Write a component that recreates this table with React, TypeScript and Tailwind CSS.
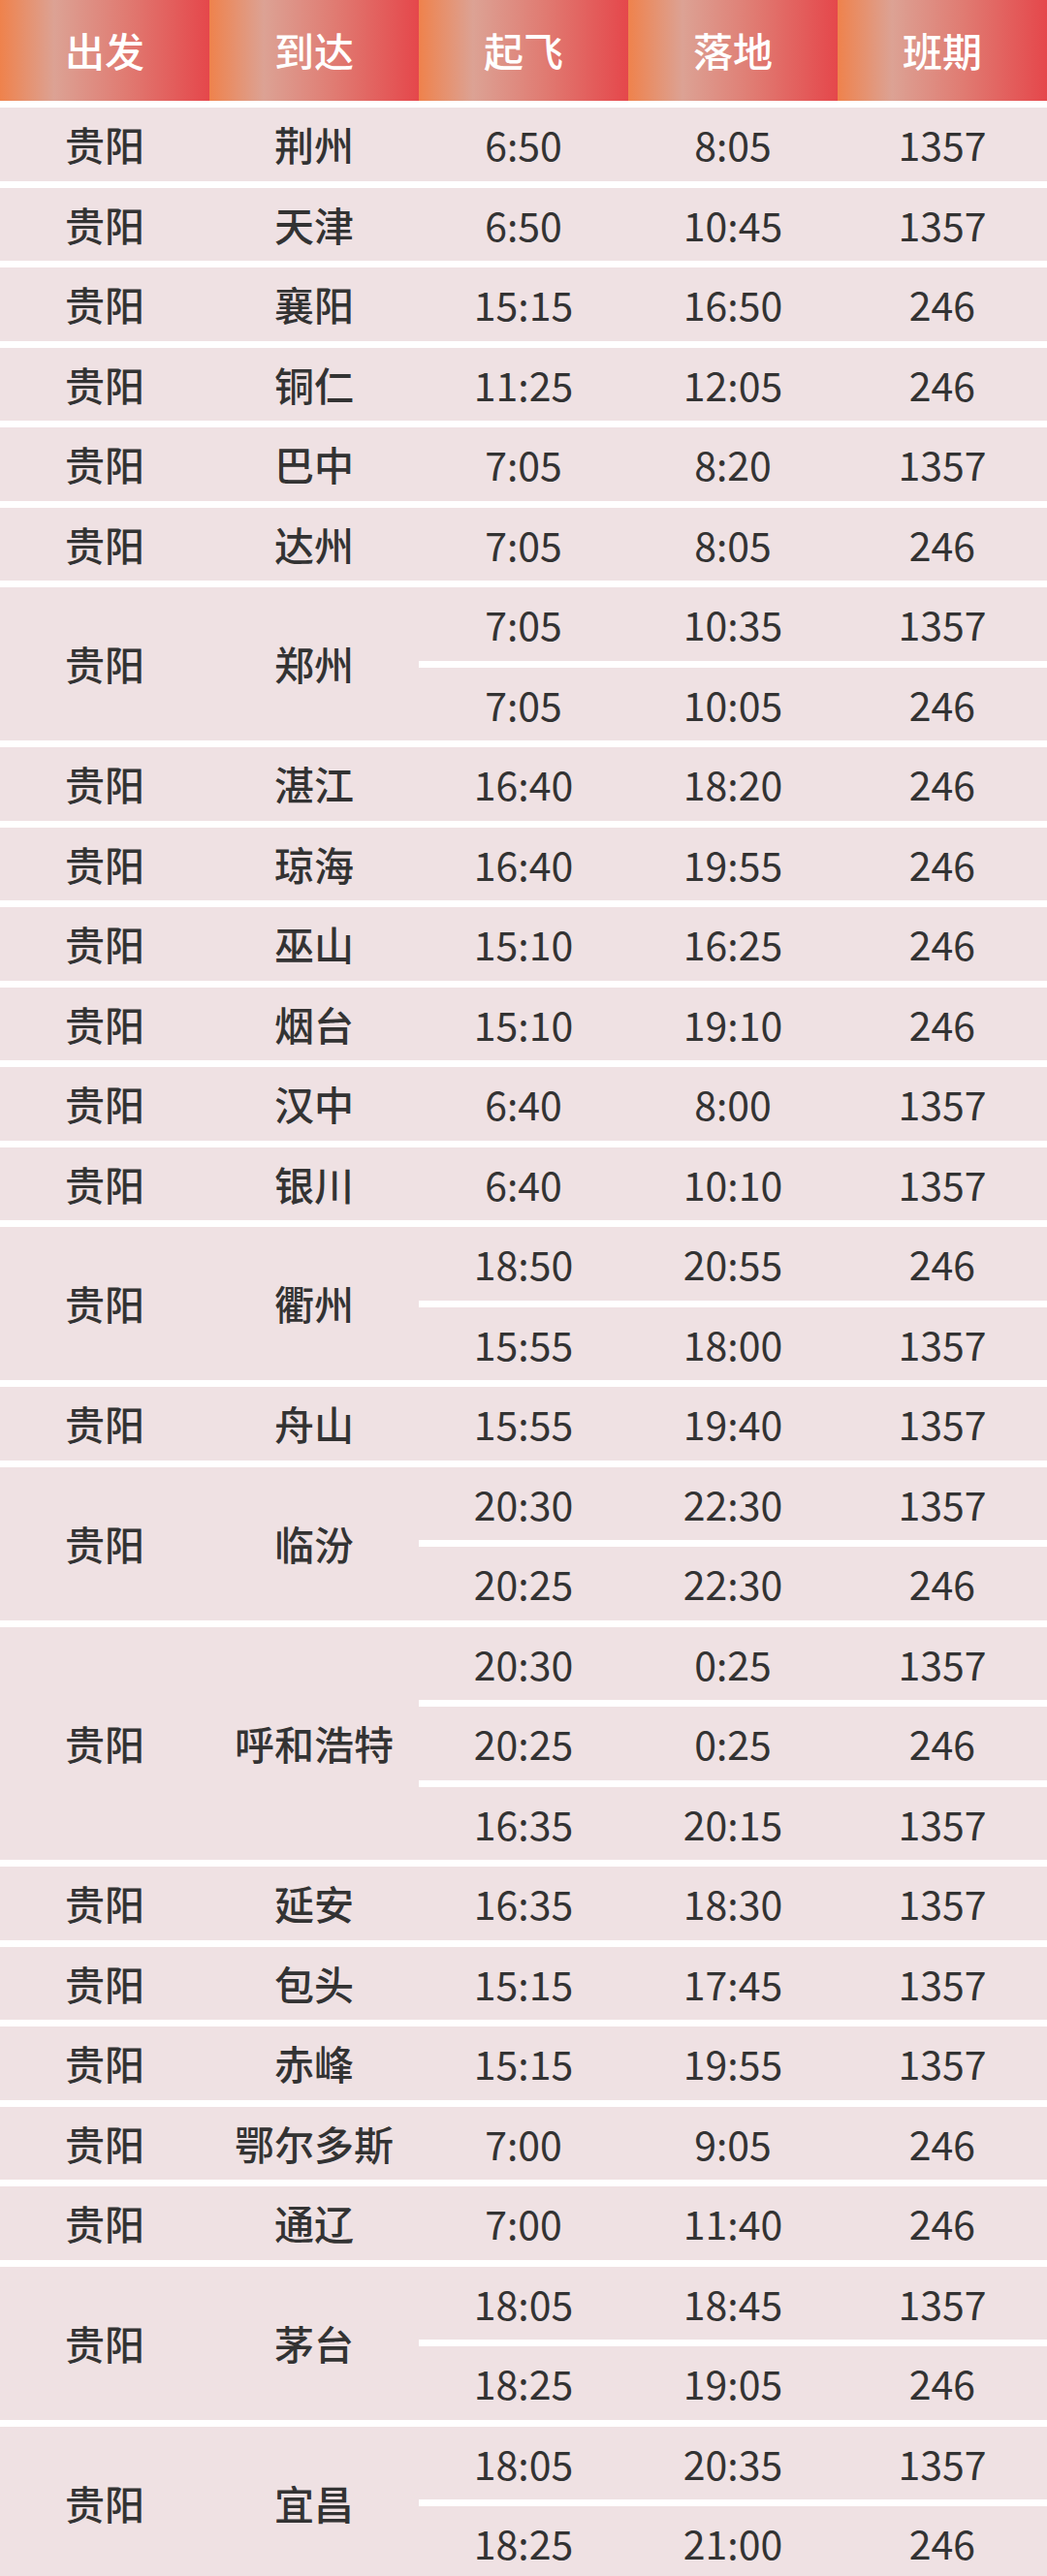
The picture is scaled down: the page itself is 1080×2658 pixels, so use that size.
type Leg = [string, string, string];
type Group = { to: string; legs: Leg[] };

const groups: Group[] = [
  { to: '荆州', legs: [['6:50', '8:05', '1357']] },
  { to: '天津', legs: [['6:50', '10:45', '1357']] },
  { to: '襄阳', legs: [['15:15', '16:50', '246']] },
  { to: '铜仁', legs: [['11:25', '12:05', '246']] },
  { to: '巴中', legs: [['7:05', '8:20', '1357']] },
  { to: '达州', legs: [['7:05', '8:05', '246']] },
  { to: '郑州', legs: [['7:05', '10:35', '1357'], ['7:05', '10:05', '246']] },
  { to: '湛江', legs: [['16:40', '18:20', '246']] },
  { to: '琼海', legs: [['16:40', '19:55', '246']] },
  { to: '巫山', legs: [['15:10', '16:25', '246']] },
  { to: '烟台', legs: [['15:10', '19:10', '246']] },
  { to: '汉中', legs: [['6:40', '8:00', '1357']] },
  { to: '银川', legs: [['6:40', '10:10', '1357']] },
  { to: '衢州', legs: [['18:50', '20:55', '246'], ['15:55', '18:00', '1357']] },
  { to: '舟山', legs: [['15:55', '19:40', '1357']] },
  { to: '临汾', legs: [['20:30', '22:30', '1357'], ['20:25', '22:30', '246']] },
  {
    to: '呼和浩特',
    legs: [
      ['20:30', '0:25', '1357'],
      ['20:25', '0:25', '246'],
      ['16:35', '20:15', '1357'],
    ],
  },
  { to: '延安', legs: [['16:35', '18:30', '1357']] },
  { to: '包头', legs: [['15:15', '17:45', '1357']] },
  { to: '赤峰', legs: [['15:15', '19:55', '1357']] },
  { to: '鄂尔多斯', legs: [['7:00', '9:05', '246']] },
  { to: '通辽', legs: [['7:00', '11:40', '246']] },
  { to: '茅台', legs: [['18:05', '18:45', '1357'], ['18:25', '19:05', '246']] },
  { to: '宜昌', legs: [['18:05', '20:35', '1357'], ['18:25', '21:00', '246']] },
];

const headers = ['出发', '到达', '起飞', '落地', '班期'];

const App = () => {
  return (
    <div
      className="w-[1080px] bg-white flex flex-col gap-[7px] text-[41px] text-[#333]"
      style={{ fontFamily: '"Noto Sans CJK SC", "Noto Sans", sans-serif' }}
    >
      <div className="grid grid-cols-5 h-[104px]">
        {headers.map((h) => (
          <div
            key={h}
            className="flex items-center justify-center font-medium text-white bg-[linear-gradient(90deg,#ef824c_0%,#dca294_26%,#e07b72_60%,#e5474b_100%)]"
          >
            {h}
          </div>
        ))}
      </div>

      {groups.map((g) => (
        <div key={g.to} className="grid grid-cols-[216px_216px_1fr] bg-[#efe1e3]">
          <div className="flex items-center justify-center font-medium">贵阳</div>
          <div className="flex items-center justify-center font-medium">{g.to}</div>
          <div className="flex flex-col">
            {g.legs.map((leg, i) => (
              <div key={i} className={i > 0 ? 'border-t-[7px] border-white' : ''}>
                <div className="grid grid-cols-3 h-[75.5px] items-center">
                  <div className="text-center">{leg[0]}</div>
                  <div className="text-center">{leg[1]}</div>
                  <div className="text-center">{leg[2]}</div>
                </div>
              </div>
            ))}
          </div>
        </div>
      ))}
    </div>
  );
};

export default App;
